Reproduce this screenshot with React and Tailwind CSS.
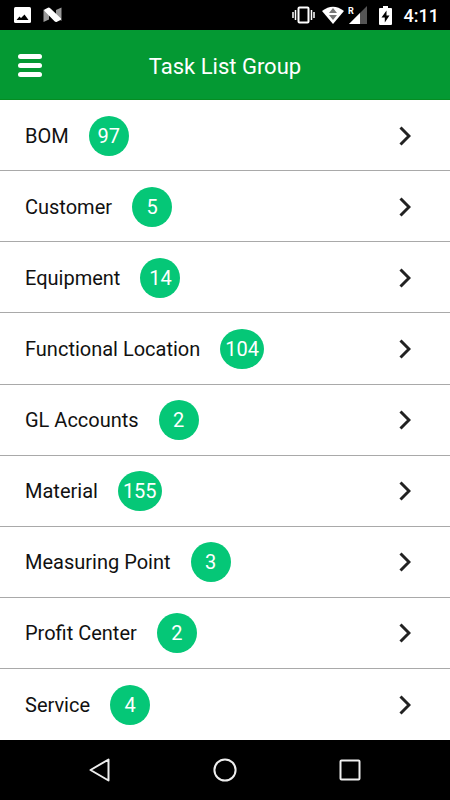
const groups = [
  { name: 'BOM', count: 97 },
  { name: 'Customer', count: 5 },
  { name: 'Equipment', count: 14 },
  { name: 'Functional Location', count: 104 },
  { name: 'GL Accounts', count: 2 },
  { name: 'Material', count: 155 },
  { name: 'Measuring Point', count: 3 },
  { name: 'Profit Center', count: 2 },
  { name: 'Service', count: 4 },
]

const StatusBar = () => {
  return (
    <div className="flex h-[30px] items-center justify-between bg-black pl-[14px] pr-[11px] text-white">
      <div className="flex items-center gap-3">
        <svg width="17" height="16" viewBox="0 0 17 16">
          <rect width="17" height="16" rx="1.5" fill="#fff" />
          <path d="M2.5 13 L5.5 9.5 L7 11 L10.5 7.5 L14.5 13 Z" fill="#000" />
        </svg>
        <svg width="19" height="16" viewBox="0 0 19 16">
          <path d="M0.5 2.5 L6 6 V12.5 L0.5 15 Z" fill="#999" />
          <path d="M18.5 0.5 V14 L13 9.5 V3 Z" fill="#999" />
          <path d="M1.5 2.5 L5.5 0.5 Q6.5 0.5 7.5 1.5 L18 11.5 Q18.5 12.2 17.5 13 L13.5 15 Q12.5 15.3 11.5 14.3 L1.3 3.8 Q0.8 3 1.5 2.5 Z" fill="#fff" />
        </svg>
      </div>
      <div className="flex items-center">
        <svg className="mr-[7px]" width="23" height="18" viewBox="0 0 23 18">
          <rect x="6.5" y="1.5" width="10" height="15" rx="1" fill="none" stroke="#fff" strokeWidth="2" />
          <path d="M1 6 V12 M3.5 4 V14 M19.5 4 V14 M22 6 V12" stroke="#fff" strokeWidth="1.5" />
        </svg>
        <svg className="mr-1" width="22" height="18" viewBox="0 0 22 18">
          <path d="M0 5 Q11 -3.5 22 5 L11 18 Z" fill="#fff" />
          <path d="M11 2 L15 7 H7 Z M7 9 H15 L11 14 Z" fill="#777" />
        </svg>
        <svg className="mr-3" width="19" height="18" viewBox="0 0 19 18">
          <path d="M19 0 V18 H1 Z" fill="#555" />
          <path d="M12 7 V18 H1 Z" fill="#fff" />
          <text x="0" y="8" fontSize="9" fontWeight="700" fill="#fff">R</text>
        </svg>
        <svg className="mr-3" width="13" height="19" viewBox="0 0 13 19">
          <path d="M4 0 H9 V2 H12 Q13 2 13 3 V18 Q13 19 12 19 H1 Q0 19 0 18 V3 Q0 2 1 2 H4 Z" fill="#fff" />
          <path d="M7.5 4.5 L2.5 11.5 H5.8 V16.5 L10.5 9.5 H7.5 Z" fill="#000" />
        </svg>
        <span className="pt-px text-lg leading-6 font-medium">4:11</span>
      </div>
    </div>
  )
}

const Header = () => {
  return (
    <header className="grid h-[70px] grid-cols-[1fr_auto_1fr] items-center border-b border-[#058d22] bg-[#049933] px-[18px]">
      <button type="button" aria-label="Menu" className="flex w-6 flex-col gap-1 pt-px">
        <span className="h-[5px] w-full rounded-full bg-white" />
        <span className="h-[5px] w-full rounded-full bg-white" />
        <span className="h-[5px] w-full rounded-full bg-white" />
      </button>
      <h1 className="pt-1 text-[22px] leading-7 text-white">Task List Group</h1>
    </header>
  )
}

const GroupRow = ({ group }) => {
  return (
    <li className="flex min-h-[71px] flex-1 border-b border-[#a9a9a9] last:border-b-0">
      <button type="button" className="flex w-full items-center pt-px pl-[25px] pr-[39px] text-left text-xl leading-6 text-[#111]">
        <span>{group.name}</span>
        <span className="ml-5 flex h-10 min-w-10 items-center justify-center rounded-[50%] bg-[#05c777] px-[5px] text-white">
          {group.count}
        </span>
        <svg className="ml-auto" width="12" height="20" viewBox="0 0 12 20">
          <path d="M1.5 1.5 L10 10 L1.5 18.5" fill="none" stroke="#222" strokeWidth="3" />
        </svg>
      </button>
    </li>
  )
}

const NavBar = () => {
  return (
    <nav className="flex h-[60px] items-center justify-center gap-[101px] bg-black">
      <button type="button" aria-label="Back">
        <svg width="24" height="24" viewBox="0 0 24 24">
          <path d="M20.5 1.5 V22.5 L2.5 12 Z" fill="none" stroke="#eee" strokeWidth="2" strokeLinejoin="round" />
        </svg>
      </button>
      <button type="button" aria-label="Home">
        <svg width="24" height="24" viewBox="0 0 24 24">
          <circle cx="12" cy="12" r="10.6" fill="none" stroke="#eee" strokeWidth="2" />
        </svg>
      </button>
      <button type="button" aria-label="Recent apps">
        <svg width="24" height="24" viewBox="0 0 24 24">
          <rect x="2.5" y="2.5" width="19" height="19" rx="1" fill="none" stroke="#eee" strokeWidth="2" />
        </svg>
      </button>
    </nav>
  )
}

export default function App() {
  return (
    <div className="flex min-h-screen flex-col bg-white font-[Roboto,sans-serif]">
      <StatusBar />
      <Header />
      <ul className="flex flex-1 flex-col">
        {groups.map(g => (
          <GroupRow key={g.name} group={g} />
        ))}
      </ul>
      <NavBar />
    </div>
  )
}
